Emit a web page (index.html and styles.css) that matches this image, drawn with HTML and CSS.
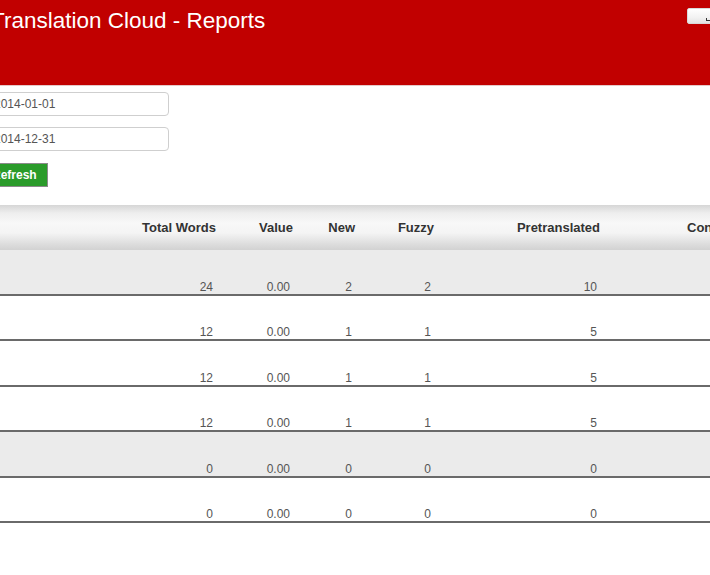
FILE: index.html
```html
<!DOCTYPE html>
<html>
<head>
<meta charset="utf-8">
<title>Translation Cloud - Reports</title>
<link rel="stylesheet" href="styles.css">
</head>
<body>
<div class="page">
  <header class="topbar">
    <h1 class="title">Translation Cloud - Reports</h1>
    <button class="user-btn"><span class="user-glyph"></span></button>
  </header>
  <form class="filters">
    <input class="date-input" type="text" value="2014-01-01">
    <input class="date-input" type="text" value="2014-12-31">
    <button class="refresh-btn" type="button">Refresh</button>
  </form>
  <table class="report">
    <colgroup>
      <col class="c-name"><col class="c-total"><col class="c-value"><col class="c-new"><col class="c-fuzzy"><col class="c-pre"><col class="c-conf">
    </colgroup>
    <thead>
      <tr>
        <th class="name"></th>
        <th>Total Words</th>
        <th>Value</th>
        <th>New</th>
        <th>Fuzzy</th>
        <th>Pretranslated</th>
        <th>Confirmed</th>
      </tr>
    </thead>
    <tbody>
      <tr class="group"><td class="name"></td><td>24</td><td>0.00</td><td>2</td><td>2</td><td>10</td><td>10</td></tr>
      <tr><td class="name"></td><td>12</td><td>0.00</td><td>1</td><td>1</td><td>5</td><td>5</td></tr>
      <tr><td class="name"></td><td>12</td><td>0.00</td><td>1</td><td>1</td><td>5</td><td>5</td></tr>
      <tr><td class="name"></td><td>12</td><td>0.00</td><td>1</td><td>1</td><td>5</td><td>5</td></tr>
      <tr class="group"><td class="name"></td><td>0</td><td>0.00</td><td>0</td><td>0</td><td>0</td><td>0</td></tr>
      <tr><td class="name"></td><td>0</td><td>0.00</td><td>0</td><td>0</td><td>0</td><td>0</td></tr>
    </tbody>
  </table>
</div>
</body>
</html>
```

FILE: styles.css
```css
html, body {
  margin: 0;
  padding: 0;
  background: #fff;
  overflow: hidden;
}
body {
  font-family: "Liberation Sans", Arial, sans-serif;
  width: 710px;
  height: 575px;
}
.page {
  margin-left: -20px;
  width: 740px;
}
.topbar {
  display: flex;
  align-items: flex-start;
  background: #c10000;
  height: 85px;
  border-bottom: 1px solid #e6c8c8;
}
.title {
  margin: 0;
  padding: 8px 0 0 11px;
  font-size: 22.5px;
  font-weight: normal;
  color: #fff;
  line-height: normal;
}
.user-btn {
  margin: 8px 0 0 auto;
  width: 33px;
  height: 16px;
  padding: 0;
  border: 1px solid #d9d9d9;
  border-radius: 2px;
  background: linear-gradient(to bottom, #ffffff 0%, #f2f2f2 60%, #e4e4e4 100%);
  position: relative;
}
.user-glyph {
  position: absolute;
  left: 18px;
  top: 9px;
  width: 3px;
  height: 2px;
  border-left: 1px solid #333;
  border-bottom: 1px solid #333;
}
.filters {
  display: flex;
  flex-direction: column;
  align-items: flex-start;
  padding: 6px 0 0 6px;
  margin: 0;
}
.date-input {
  box-sizing: border-box;
  width: 183px;
  height: 24px;
  margin: 0 0 11px 0;
  padding: 0 7px;
  border: 1px solid #cfcfcf;
  border-radius: 4px;
  font-family: "Liberation Sans", Arial, sans-serif;
  font-size: 12px;
  color: #555;
  background: #fff;
}
.date-input + .date-input {
  margin-bottom: 12px;
}
.refresh-btn {
  box-sizing: border-box;
  height: 24px;
  width: 62px;
  padding: 0 0 0 5px;
  text-align: left;
  border: 1px solid #8a8a8a;
  background: #2a9b2a;
  color: #fff;
  font-family: "Liberation Sans", Arial, sans-serif;
  font-size: 12px;
  font-weight: bold;
}
.report {
  margin-top: 18px;
  border-collapse: collapse;
  table-layout: fixed;
  width: 775px;
}
.c-name { width: 150px; }
.c-total { width: 89px; }
.c-value { width: 77px; }
.c-new { width: 62px; }
.c-fuzzy { width: 79px; }
.c-pre { width: 166px; }
.c-conf { width: 152px; }
.report th {
  height: 45px;
  padding: 0 3px 0 0;
  text-align: right;
  font-size: 13px;
  font-weight: bold;
  color: #333;
  background: linear-gradient(to bottom, #d6d6d6 0%, #eeeeee 18%, #f8f8f8 40%, #f4f4f4 62%, #dcdcdc 88%, #d2d2d2 100%);
  white-space: nowrap;
}
.report td {
  height: 43.5px;
  padding: 0 6px 0 0;
  text-align: right;
  vertical-align: bottom;
  font-size: 12px;
  color: #555;
  border-bottom: 2px solid #6a6a6a;
  background: #fff;
}
.report tr.group td {
  background: #ebebeb;
}
```
